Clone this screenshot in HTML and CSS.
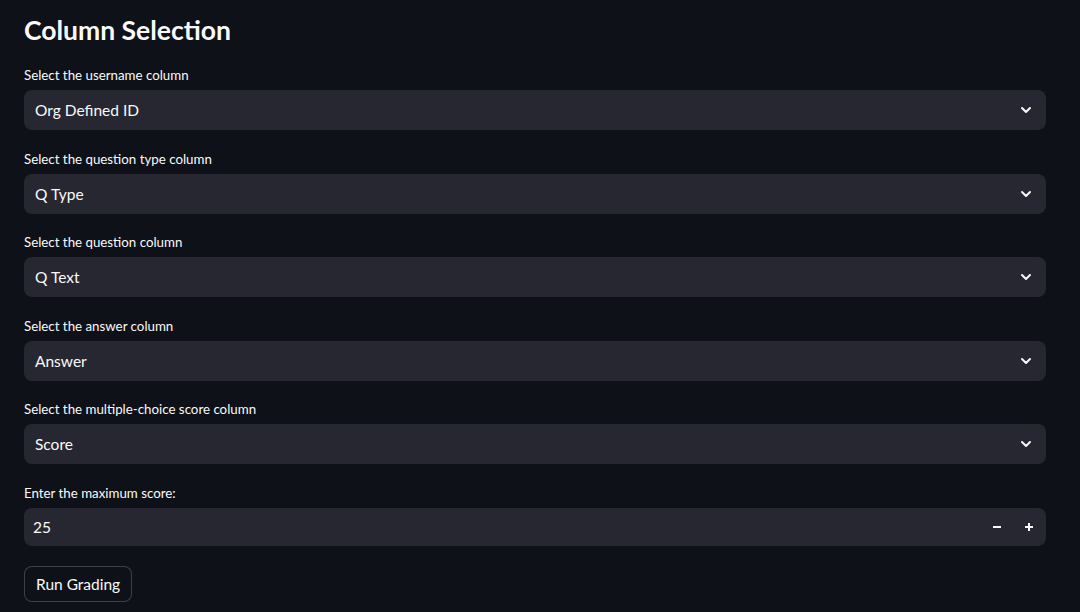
FILE: index.html
```html
<!DOCTYPE html>
<html>
<head>
<meta charset="utf-8">
<link rel="stylesheet" href="styles.css">
</head>
<body>
<main class="main">
  <h3 class="title">Column Selection</h3>
  <div class="fields">
    <div class="field">
      <label class="label">Select the username column</label>
      <div class="select"><span class="value">Org Defined ID</span><svg class="chev" viewBox="0 0 24 24"><path d="M6 9l6 6 6-6"/></svg></div>
    </div>
    <div class="field">
      <label class="label">Select the question type column</label>
      <div class="select"><span class="value">Q Type</span><svg class="chev" viewBox="0 0 24 24"><path d="M6 9l6 6 6-6"/></svg></div>
    </div>
    <div class="field">
      <label class="label">Select the question column</label>
      <div class="select"><span class="value">Q Text</span><svg class="chev" viewBox="0 0 24 24"><path d="M6 9l6 6 6-6"/></svg></div>
    </div>
    <div class="field">
      <label class="label">Select the answer column</label>
      <div class="select"><span class="value">Answer</span><svg class="chev" viewBox="0 0 24 24"><path d="M6 9l6 6 6-6"/></svg></div>
    </div>
    <div class="field">
      <label class="label">Select the multiple-choice score column</label>
      <div class="select"><span class="value">Score</span><svg class="chev" viewBox="0 0 24 24"><path d="M6 9l6 6 6-6"/></svg></div>
    </div>
    <div class="field">
      <label class="label">Enter the maximum score:</label>
      <div class="number">
        <span class="num-value">25</span>
        <span class="step"><svg viewBox="0 0 12 12"><path d="M2 6h8"/></svg></span>
        <span class="step"><svg viewBox="0 0 12 12"><path d="M2 6h8M6 2v8"/></svg></span>
      </div>
    </div>
  </div>
  <button class="btn">Run Grading</button>
</main>
</body>
</html>
```

FILE: styles.css
```css
html, body {
  margin: 0;
  padding: 0;
  background: #0e1117;
  color: #fafafa;
  font-family: Lato, "Noto Sans", sans-serif;
}
.main {
  padding: 0 34px 0 24px;
  display: flex;
  flex-direction: column;
  align-items: flex-start;
}
.title {
  margin: 0;
  padding-top: 10px;
  line-height: 40px;
  font-size: 26.5px;
  font-weight: 700;
  margin-bottom: 13px;
}
.fields {
  align-self: stretch;
  display: flex;
  flex-direction: column;
  gap: 16.5px;
}
.field {
  display: flex;
  flex-direction: column;
}
.label {
  font-size: 13.3px;
  line-height: 24px;
  margin-bottom: 3px;
}
.select {
  height: 40px;
  background: #262730;
  border-radius: 8px;
  display: flex;
  align-items: center;
  padding: 0 12px 0 11px;
}
.value {
  flex: 1;
  font-size: 15.5px;
}
.chev {
  width: 16px;
  height: 16px;
  fill: none;
  stroke: #fafafa;
  stroke-width: 3;
  stroke-linecap: round;
  stroke-linejoin: round;
}
.number {
  height: 38px;
  background: #262730;
  border-radius: 8px;
  display: flex;
  align-items: center;
  padding: 0 1px 0 9px;
}
.num-value {
  flex: 1;
  font-size: 15.5px;
}
.step {
  width: 32px;
  height: 38px;
  display: flex;
  align-items: center;
  justify-content: center;
}
.step svg {
  width: 12px;
  height: 12px;
  fill: none;
  stroke: #fafafa;
  stroke-width: 2;
}
.btn {
  margin-top: 20px;
  height: 36px;
  padding: 0 11px;
  background: #0e1117;
  color: #fafafa;
  border: 1px solid rgba(250, 250, 250, 0.2);
  border-radius: 8px;
  font-family: Lato, "Noto Sans", sans-serif;
  font-size: 15.5px;
}
```
